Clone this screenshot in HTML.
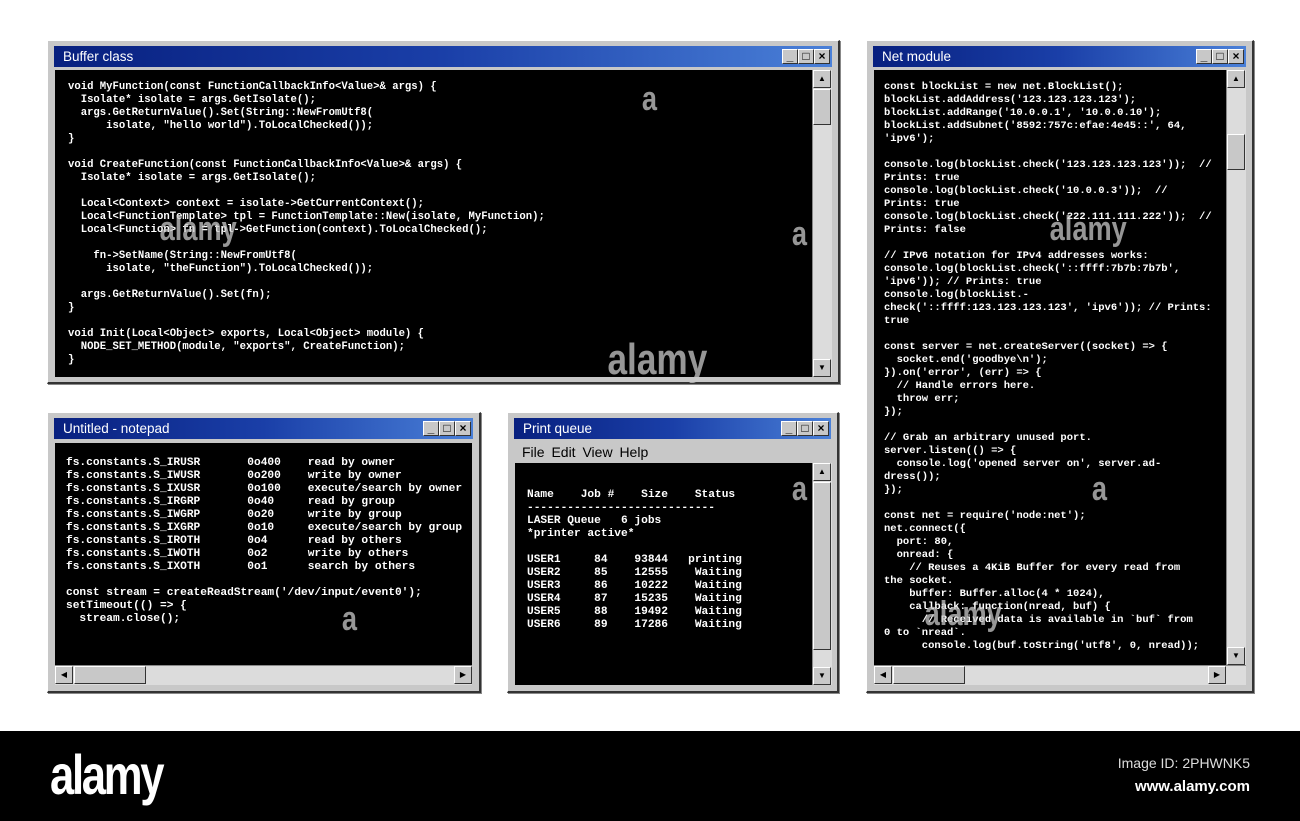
<!DOCTYPE html>
<html><head><meta charset="utf-8"><style>
*{margin:0;padding:0;box-sizing:border-box}
body{width:1300px;height:821px;background:#fff;position:relative;overflow:hidden;font-family:"Liberation Sans",sans-serif}
.win{position:absolute;background:#c8c8c8;border:1px solid #fff;border-right:2px solid #333;border-bottom:2px solid #333;box-shadow:1px 1px 0 #888}
.tb{position:absolute;left:6px;right:6px;top:5px;height:21px;background:linear-gradient(90deg,#08207f,#1a3fa8 50%,#4a80d8);color:#fff;font-size:13.5px;line-height:21px;padding-left:9px}
.btns{position:absolute;right:2px;top:3px;display:flex}
.btns span{width:16px;height:15px;background:#c8c8c8;border:1px solid #fff;border-right:1px solid #333;border-bottom:1px solid #333;color:#000;font:bold 12px/12px "Liberation Sans",sans-serif;text-align:center}
.blk{position:absolute;background:#000;color:#fff;font-family:"Liberation Mono",monospace;font-weight:bold;white-space:pre;line-height:13px;overflow:hidden}
.vs{position:absolute;width:20px;background:#dcdcdc;border-left:1px solid #888}
.hs{position:absolute;height:20px;background:#dcdcdc;border-top:1px solid #888}
.ab{position:absolute;width:18px;height:18px;background:#c8c8c8;border:1px solid #fff;border-right:1px solid #333;border-bottom:1px solid #333;font-size:8px;line-height:16px;text-align:center;color:#000}
.th{position:absolute;background:#c8c8c8;border:1px solid #fff;border-right:1px solid #333;border-bottom:1px solid #333}
.wm{position:absolute;color:rgba(200,200,200,.75);font:bold 34px "Liberation Sans",sans-serif;transform:scaleX(.8)}
</style></head><body>

<!-- Buffer class -->
<div class="win" style="left:47px;top:40px;width:793px;height:344px">
<div class="tb">Buffer class<div class="btns"><span>_</span><span>□</span><span>×</span></div></div>
</div>
<div class="blk" style="left:55px;top:70px;width:757px;height:307px;font-size:10.6px;padding:11px 0 0 13px">void MyFunction(const FunctionCallbackInfo&lt;Value&gt;&amp; args) {
  Isolate* isolate = args.GetIsolate();
  args.GetReturnValue().Set(String::NewFromUtf8(
      isolate, "hello world").ToLocalChecked());
}

void CreateFunction(const FunctionCallbackInfo&lt;Value&gt;&amp; args) {
  Isolate* isolate = args.GetIsolate();

  Local&lt;Context&gt; context = isolate-&gt;GetCurrentContext();
  Local&lt;FunctionTemplate&gt; tpl = FunctionTemplate::New(isolate, MyFunction);
  Local&lt;Function&gt; fn = tpl-&gt;GetFunction(context).ToLocalChecked();

    fn-&gt;SetName(String::NewFromUtf8(
      isolate, "theFunction").ToLocalChecked());

  args.GetReturnValue().Set(fn);
}

void Init(Local&lt;Object&gt; exports, Local&lt;Object&gt; module) {
  NODE_SET_METHOD(module, "exports", CreateFunction);
}</div>
<div class="vs" style="left:812px;top:70px;height:307px"><div class="ab" style="top:0;left:0">▲</div><div class="th" style="top:19px;left:0;width:18px;height:36px"></div><div class="ab" style="bottom:0;left:0">▼</div></div>

<!-- Net module -->
<div class="win" style="left:866px;top:40px;width:388px;height:653px">
<div class="tb">Net module<div class="btns"><span>_</span><span>□</span><span>×</span></div></div>
</div>
<div class="blk" style="left:874px;top:70px;width:352px;height:595px;font-size:10.5px;padding:11px 0 0 10px">const blockList = new net.BlockList();
blockList.addAddress('123.123.123.123');
blockList.addRange('10.0.0.1', '10.0.0.10');
blockList.addSubnet('8592:757c:efae:4e45::', 64,
'ipv6');

console.log(blockList.check('123.123.123.123'));  //
Prints: true
console.log(blockList.check('10.0.0.3'));  //
Prints: true
console.log(blockList.check('222.111.111.222'));  //
Prints: false

// IPv6 notation for IPv4 addresses works:
console.log(blockList.check('::ffff:7b7b:7b7b',
'ipv6')); // Prints: true
console.log(blockList.-
check('::ffff:123.123.123.123', 'ipv6')); // Prints:
true

const server = net.createServer((socket) =&gt; {
  socket.end('goodbye\n');
}).on('error', (err) =&gt; {
  // Handle errors here.
  throw err;
});

// Grab an arbitrary unused port.
server.listen(() =&gt; {
  console.log('opened server on', server.ad-
dress());
});

const net = require('node:net');
net.connect({
  port: 80,
  onread: {
    // Reuses a 4KiB Buffer for every read from
the socket.
    buffer: Buffer.alloc(4 * 1024),
    callback: function(nread, buf) {
      // Received data is available in `buf` from
0 to `nread`.
      console.log(buf.toString('utf8', 0, nread));</div>
<div class="vs" style="left:1226px;top:70px;height:595px"><div class="ab" style="top:0;left:0">▲</div><div class="th" style="top:64px;left:0;width:18px;height:36px"></div><div class="ab" style="bottom:0;left:0">▼</div></div>
<div class="hs" style="left:874px;top:665px;width:372px"><div class="ab" style="left:0;top:0">◀</div><div class="th" style="left:19px;top:0;width:72px;height:18px"></div><div class="ab" style="right:20px;top:0">▶</div></div>

<!-- Notepad -->
<div class="win" style="left:47px;top:412px;width:434px;height:281px">
<div class="tb">Untitled - notepad<div class="btns"><span>_</span><span>□</span><span>×</span></div></div>
</div>
<div class="blk" style="left:55px;top:443px;width:417px;height:222px;font-size:11.2px;padding:14px 0 0 11px">fs.constants.S_IRUSR       0o400    read by owner
fs.constants.S_IWUSR       0o200    write by owner
fs.constants.S_IXUSR       0o100    execute/search by owner
fs.constants.S_IRGRP       0o40     read by group
fs.constants.S_IWGRP       0o20     write by group
fs.constants.S_IXGRP       0o10     execute/search by group
fs.constants.S_IROTH       0o4      read by others
fs.constants.S_IWOTH       0o2      write by others
fs.constants.S_IXOTH       0o1      search by others

const stream = createReadStream('/dev/input/event0');
setTimeout(() =&gt; {
  stream.close();</div>
<div class="hs" style="left:55px;top:665px;width:417px"><div class="ab" style="left:0;top:0">◀</div><div class="th" style="left:19px;top:0;width:72px;height:18px"></div><div class="ab" style="right:0;top:0">▶</div></div>

<!-- Print queue -->
<div class="win" style="left:507px;top:412px;width:332px;height:281px">
<div class="tb">Print queue<div class="btns"><span>_</span><span>□</span><span>×</span></div></div>
<div style="position:absolute;left:14px;top:31px;font-size:14px;color:#000;word-spacing:3px">File Edit View Help</div>
</div>
<div class="blk" style="left:515px;top:463px;width:297px;height:222px;font-size:11.2px;padding:26px 0 0 12px">Name    Job #    Size    Status
----------------------------
LASER Queue   6 jobs
*printer active*

USER1     84    93844   printing
USER2     85    12555    Waiting
USER3     86    10222    Waiting
USER4     87    15235    Waiting
USER5     88    19492    Waiting
USER6     89    17286    Waiting</div>
<div class="vs" style="left:812px;top:463px;height:222px"><div class="ab" style="top:0;left:0">▲</div><div class="th" style="top:19px;left:0;width:18px;height:168px"></div><div class="ab" style="bottom:0;left:0">▼</div></div>

<!-- watermarks -->
<div class="wm" style="left:150px;top:210px">alamy</div>
<div class="wm" style="left:595px;top:335px;font-size:44px">alamy</div>
<div class="wm" style="left:1040px;top:210px">alamy</div>
<div class="wm" style="left:915px;top:595px">alamy</div>
<div class="wm" style="left:640px;top:80px">a</div>
<div class="wm" style="left:790px;top:215px">a</div>
<div class="wm" style="left:340px;top:600px">a</div>
<div class="wm" style="left:790px;top:470px">a</div>
<div class="wm" style="left:1090px;top:470px">a</div>

<!-- bottom bar -->
<div style="position:absolute;left:0;top:731px;width:1300px;height:90px;background:#000">
<div style="position:absolute;left:50px;top:14px;color:#fff;font:bold 56px/60px 'Liberation Sans',sans-serif;letter-spacing:-3px;transform:scaleX(.78);transform-origin:left">alamy</div>
<div style="position:absolute;right:50px;top:21px;color:#ddd;font-size:14px;text-align:right;line-height:23px">Image ID: 2PHWNK5<br><b style="color:#fff;font-size:15px">www.alamy.com</b></div>
</div>
</body></html>
